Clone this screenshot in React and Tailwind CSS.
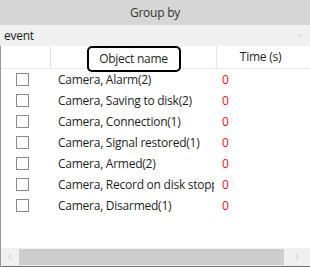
import { ChevronDown, ChevronLeft, ChevronRight } from 'lucide-react';

const rows = [
  'Camera, Alarm(2)',
  'Camera, Saving to disk(2)',
  'Camera, Connection(1)',
  'Camera, Signal restored(1)',
  'Camera, Armed(2)',
  'Camera, Record on disk stopped(1)',
  'Camera, Disarmed(1)',
];

export default function App() {
  return (
    <div
      className="w-[310px] h-[267px] bg-white flex flex-col overflow-hidden text-[12px] tracking-[-0.25px] text-[#1e1e1e]"
      style={{ fontFamily: '"Open Sans", "Noto Sans", sans-serif' }}
    >
      <div className="h-[25px] shrink-0 bg-[#d6d6d6] flex items-center justify-center text-[#333]">
        Group by
      </div>
      <div className="h-[21px] shrink-0 bg-[#f0f0f0] flex items-center justify-between pl-[4px] pr-[6px]">
        <span>event</span>
        <ChevronDown size={9} strokeWidth={1.5} className="text-[#b0b0b0]" />
      </div>

      <div className="flex-1 flex flex-col border-l border-[#9a9a9a] min-h-0">
        <div className="h-[23px] shrink-0 flex border-b border-[#ececec]">
          <div className="w-[50px] border-r border-[#e3e3e3]" />
          <div className="w-[166px] border-r border-[#e3e3e3] flex items-center justify-center">
            <div className="w-[94px] h-[26px] mt-[3px] border-[2px] border-black rounded-[5px] bg-white flex items-center justify-center">
              Object name
            </div>
          </div>
          <div className="flex-1 flex items-center justify-center pr-[6px]">Time (s)</div>
        </div>

        <div className="flex-1 flex flex-col">
          {rows.map((r) => (
            <div key={r} className="h-[21px] flex items-center">
              <div className="w-[50px] flex justify-start pl-[15px]">
                <div className="w-[13px] h-[13px] border border-[#8a8a8a] bg-white" />
              </div>
              <div className="w-[163px] pl-[7px] whitespace-nowrap overflow-hidden">{r}</div>
              <div className="flex-1 pl-[8px] text-[#e81123]">0</div>
            </div>
          ))}
        </div>

        <div className="h-[19px] shrink-0 flex bg-[#f0f0f0] border-b border-[#707070]">
          <div className="w-[18px] flex items-center justify-center">
            <ChevronLeft size={10} strokeWidth={1.5} className="text-[#a0a0a0]" />
          </div>
          <div className="flex-1 bg-[#cdcdcd] my-[1px]" />
          <div className="w-[26px] flex items-center justify-center">
            <ChevronRight size={10} strokeWidth={1.5} className="text-[#a0a0a0]" />
          </div>
        </div>
      </div>
    </div>
  );
}
